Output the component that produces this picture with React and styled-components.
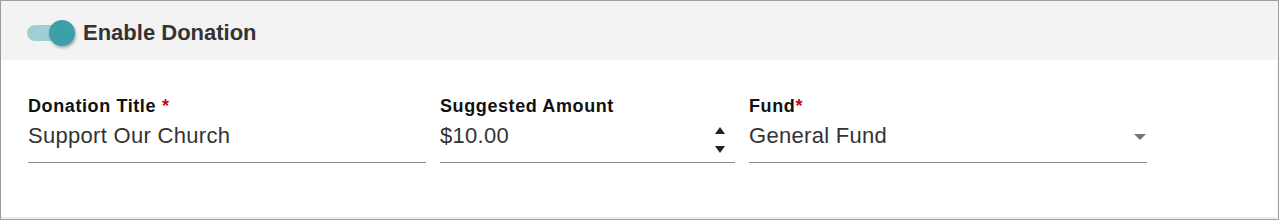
import styled, { createGlobalStyle } from 'styled-components';

const GlobalStyle = createGlobalStyle`
  body {
    margin: 0;
    font-family: "Liberation Sans", Arial, sans-serif;
    background: #fff;
  }
`;

const Frame = styled.div`
  width: 1279px;
  height: 220px;
  box-sizing: border-box;
  border: 1px solid #a0a0a0;
  padding: 0 1px 2px 0;
`;

const Card = styled.div`
  height: 100%;
  background: #fff;
  box-shadow: 0 1px 2px rgba(0, 0, 0, 0.14);
`;

const Header = styled.div`
  height: 59px;
  box-sizing: border-box;
  padding: 4px 0 0 26px;
  background: #f3f3f3;
  display: flex;
  align-items: center;
  gap: 8px;
`;

const Track = styled.div`
  position: relative;
  width: 42px;
  height: 16px;
  border-radius: 8px;
  background: #9fcfd3;
  margin-top: 1px;
`;

const Thumb = styled.span`
  position: absolute;
  left: 22px;
  top: -5px;
  width: 26px;
  height: 26px;
  border-radius: 50%;
  background: #3d9fa8;
  box-shadow: 1px 2px 3px rgba(0, 0, 0, 0.3);
`;

const HeaderTitle = styled.span`
  margin-left: 6px;
  font-size: 22px;
  font-weight: 700;
  color: #333;
`;

const Fields = styled.div`
  display: grid;
  grid-template-columns: 398px 295px 398px;
  column-gap: 14px;
  padding: 35px 0 0 27px;
`;

const Field = styled.div`
  display: flex;
  flex-direction: column;
`;

const Label = styled.label`
  font-size: 18px;
  line-height: 22px;
  font-weight: 700;
  letter-spacing: 0.6px;
  color: #111;
`;

const Star = styled.span`
  color: #d0021b;
  margin-left: ${(p) => (p.$spaced ? '6px' : '0')};
`;

const ValueRow = styled.div`
  display: flex;
  align-items: center;
  justify-content: space-between;
  margin-top: 6px;
  height: 26px;
  padding-bottom: 13px;
  border-bottom: 1px solid #8a8a8a;
`;

const Value = styled.span`
  font-size: 22px;
  line-height: 26px;
  letter-spacing: 0.3px;
  color: #333;
`;

const Spinner = styled.div`
  display: flex;
  flex-direction: column;
  gap: 12px;
  margin: 4px 10px 0 0;
  align-self: flex-start;
`;

const Caret = ({ up, color, w = 10, h = 7 }) => (
  <svg width={w} height={h} viewBox={`0 0 ${w} ${h}`}>
    <polygon points={up ? `0,${h} ${w / 2},0 ${w},${h}` : `0,0 ${w},0 ${w / 2},${h}`} fill={color} />
  </svg>
);

const DropArrow = styled.div`
  display: flex;
  margin: 2px 1px 0 0;
`;

export default function App() {
  return (
    <>
      <GlobalStyle />
      <Frame>
        <Card>
          <Header>
            <Track>
              <Thumb />
            </Track>
            <HeaderTitle>Enable Donation</HeaderTitle>
          </Header>
          <Fields>
            <Field>
              <Label>
                Donation Title<Star $spaced>*</Star>
              </Label>
              <ValueRow>
                <Value>Support Our Church</Value>
              </ValueRow>
            </Field>
            <Field>
              <Label>Suggested Amount</Label>
              <ValueRow>
                <Value>$10.00</Value>
                <Spinner>
                  <Caret up color="#222" />
                  <Caret color="#222" />
                </Spinner>
              </ValueRow>
            </Field>
            <Field>
              <Label>
                Fund<Star>*</Star>
              </Label>
              <ValueRow>
                <Value>General Fund</Value>
                <DropArrow>
                  <Caret color="#757575" w={12} h={6} />
                </DropArrow>
              </ValueRow>
            </Field>
          </Fields>
        </Card>
      </Frame>
    </>
  );
}
